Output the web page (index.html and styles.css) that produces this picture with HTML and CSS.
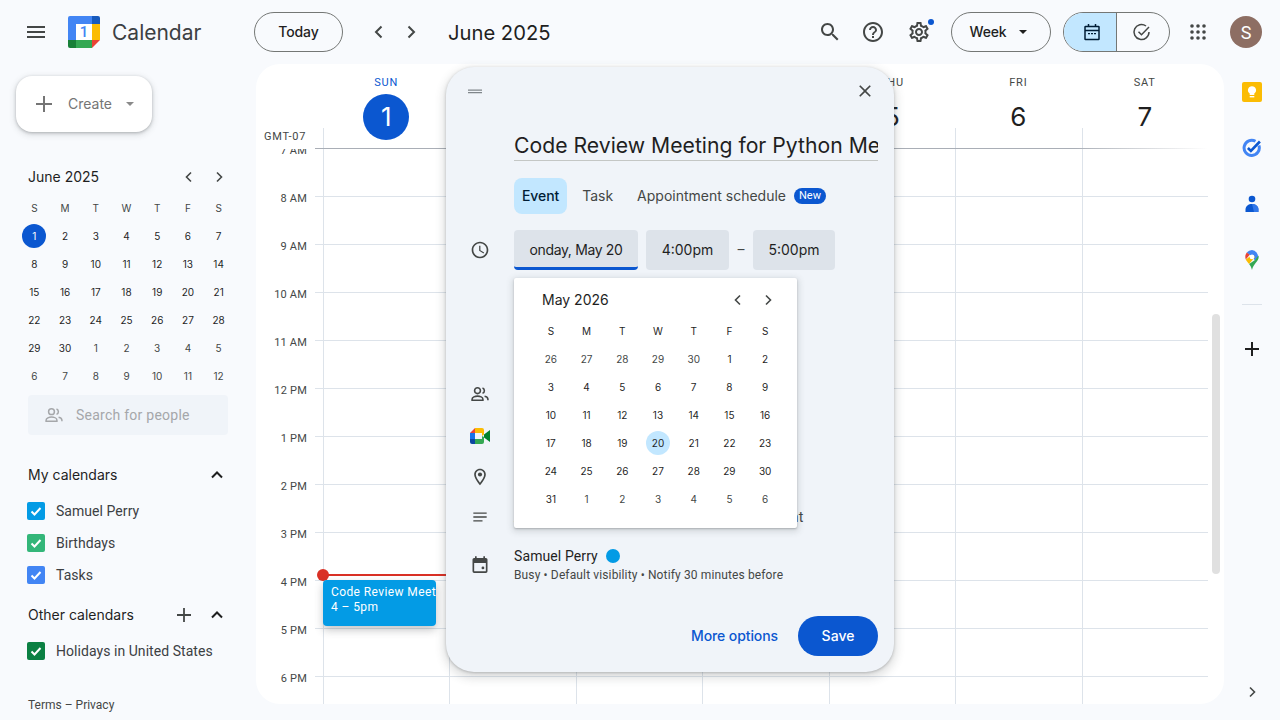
FILE: index.html
```html
<!DOCTYPE html>
<html lang="en">
<head>
<meta charset="utf-8">
<title>Calendar</title>
<link rel="stylesheet" href="styles.css">
</head>
<body>
<header class="topbar">
  <div class="brand">
    <svg class="ic24 menu" viewBox="0 0 24 24"><path d="M3 18h18v-2H3v2zm0-5h18v-2H3v2zm0-7v2h18V6H3z"/></svg>
    <svg class="logo" viewBox="0 0 32 32">
      <rect x="8" y="8" width="16" height="16" fill="#fff"/>
      <path d="M8 0H2a2 2 0 0 0-2 2v22h8V8h16V0z" fill="#4285f4"/>
      <path d="M24 0h6a2 2 0 0 1 2 2v6h-8z" fill="#185abc"/>
      <rect x="24" y="8" width="8" height="16" fill="#fbbc04"/>
      <rect x="8" y="24" width="16" height="8" fill="#34a853"/>
      <path d="M0 24h8v8H2a2 2 0 0 1-2-2z" fill="#188038"/>
      <path d="M24 24h8l-8 8z" fill="#ea4335"/>
      <text x="16" y="21" class="logo-one">1</text>
    </svg>
    <span class="brand-name">Calendar</span>
  </div>
  <button class="pill today">Today</button>
  <svg class="ic24 nav-prev" viewBox="0 0 24 24"><path class="chev" d="M14.5 6.5 9 12l5.500 5.500"/></svg>
  <svg class="ic24 nav-next" viewBox="0 0 24 24"><path class="chev" d="M9.500 6.500 15 12l-5.500 5.500"/></svg>
  <span class="period">June 2025</span>
  <svg class="ic24 t-search" viewBox="0 0 24 24"><path d="M15.500 14h-.79l-.28-.27C15.410 12.590 16 11.110 16 9.500 16 5.910 13.090 3 9.500 3S3 5.910 3 9.500 5.910 16 9.500 16c1.610 0 3.090-.59 4.230-1.570l.27.28v.79l5 4.990L20.490 19l-4.990-5zm-6 0C7.010 14 5 11.990 5 9.500S7.010 5 9.500 5 14 7.010 14 9.500 11.990 14 9.500 14z"/></svg>
  <svg class="ic24 t-help" viewBox="0 0 24 24"><path d="M11 18h2v-2h-2v2zm1-16C6.480 2 2 6.480 2 12s4.480 10 10 10 10-4.480 10-10S17.520 2 12 2zm0 18c-4.410 0-8-3.590-8-8s3.590-8 8-8 8 3.590 8 8-3.590 8-8 8zm0-14c-2.210 0-4 1.790-4 4h2c0-1.100.9-2 2-2s2 .9 2 2c0 2-3 1.750-3 5h2c0-2.250 3-2.500 3-5 0-2.210-1.790-4-4-4z"/></svg>
  <span class="settings">
    <svg class="ic24" viewBox="0 0 24 24"><path d="M19.430 12.980c.04-.32.07-.64.07-.98 0-.34-.03-.66-.07-.98l2.110-1.650c.19-.15.24-.42.12-.64l-2-3.460c-.09-.16-.26-.25-.44-.25-.06 0-.12.01-.17.03l-2.490 1c-.52-.4-1.080-.73-1.690-.98l-.38-2.650C14.460 2.180 14.250 2 14 2h-4c-.25 0-.46.18-.49.42l-.38 2.650c-.61.25-1.170.59-1.690.98l-2.490-1c-.06-.02-.12-.03-.18-.03-.17 0-.34.09-.43.25l-2 3.460c-.13.22-.07.49.12.64l2.110 1.650c-.04.32-.07.65-.07.98 0 .33.03.66.07.98l-2.110 1.650c-.19.15-.24.42-.12.64l2 3.460c.09.16.26.25.44.25.06 0 .12-.01.17-.03l2.490-1c.52.4 1.080.73 1.690.98l.38 2.650c.03.24.24.42.49.42h4c.25 0 .46-.18.49-.42l.38-2.650c.61-.25 1.170-.59 1.690-.98l2.490 1c.06.02.12.03.18.03.17 0 .34-.09.43-.25l2-3.460c.12-.22.07-.49-.12-.64l-2.110-1.650zm-1.980-1.710c.04.31.05.52.05.73 0 .21-.02.43-.05.73l-.14 1.130.89.7 1.080.84-.7 1.210-1.270-.51-1.040-.42-.9.68c-.43.32-.84.56-1.250.73l-1.060.43-.16 1.130-.2 1.350h-1.400l-.19-1.350-.16-1.130-1.060-.43c-.43-.18-.83-.41-1.230-.71l-.91-.7-1.060.43-1.270.51-.7-1.210 1.080-.84.89-.7-.14-1.130c-.03-.31-.05-.54-.05-.74s.02-.43.05-.73l.14-1.130-.89-.7-1.080-.84.7-1.210 1.270.51 1.040.42.9-.68c.43-.32.84-.56 1.250-.73l1.060-.43.16-1.130.2-1.350h1.390l.19 1.350.16 1.130 1.060.43c.43.18.83.41 1.230.71l.91.7 1.060-.43 1.270-.51.7 1.210-1.070.85-.89.7.14 1.130zM12 8c-2.210 0-4 1.790-4 4s1.790 4 4 4 4-1.790 4-4-1.790-4-4-4zm0 6c-1.100 0-2-.9-2-2s.9-2 2-2 2 .9 2 2-.9 2-2 2z"/></svg>
    <i class="badge-dot"></i>
  </span>
  <button class="pill week">Week<svg class="caret" viewBox="0 0 10 5"><path d="M0 0h10L5 5z"/></svg></button>
  <div class="toggle">
    <span class="toggle-cal">
      <svg class="ic20" viewBox="0 0 20 20"><path class="cal-line" d="M3.500 4.500h13a.5.5 0 0 1 .5.5v12a.5.5 0 0 1-.5.500h-13A.5.5 0 0 1 3 17V5a.5.5 0 0 1 .5-.5zM3 8.500h14M6.500 2v3M13.500 2v3"/><path class="cal-dots" d="M6 11h2v1.300H6zM9 11h2v1.300H9zM12 11h2v1.300h-2z"/></svg>
    </span>
    <span class="toggle-task">
      <svg class="ic20" viewBox="0 0 20 20"><path class="task-line" d="M17 10a7.500 7.500 0 1 1-3-6M6.500 9.700l3 3L17 5"/></svg>
    </span>
  </div>
  <svg class="ic24 t-apps" viewBox="0 0 24 24"><circle cx="6" cy="6" r="1.800"/><circle cx="12" cy="6" r="1.800"/><circle cx="18" cy="6" r="1.800"/><circle cx="6" cy="12" r="1.800"/><circle cx="12" cy="12" r="1.800"/><circle cx="18" cy="12" r="1.800"/><circle cx="6" cy="18" r="1.800"/><circle cx="12" cy="18" r="1.800"/><circle cx="18" cy="18" r="1.800"/></svg>
  <span class="avatar">S</span>
</header>

<main class="workspace">
  <aside class="sidebar">
    <button class="create">
      <svg class="ic24" viewBox="0 0 24 24"><path class="plus-grey" d="M12 4v16M4 12h16"/></svg>
      <span class="create-label">Create</span>
      <svg class="caret caret-grey" viewBox="0 0 10 5"><path d="M0 0h10L5 5z"/></svg>
    </button>
    <div class="mini-head">
      <span>June 2025</span>
      <svg class="ic16 mini-prev" viewBox="0 0 16 16"><path class="chev-s" d="M10 3.500 5.500 8l4.500 4.500"/></svg>
      <svg class="ic16 mini-next" viewBox="0 0 16 16"><path class="chev-s" d="M6 3.500 10.500 8 6 12.500"/></svg>
    </div>
    <div class="mini-grid">
      <b>S</b><b>M</b><b>T</b><b>W</b><b>T</b><b>F</b><b>S</b>
      <span class="today-num">1</span><span>2</span><span>3</span><span>4</span><span>5</span><span>6</span><span>7</span>
      <span>8</span><span>9</span><span>10</span><span>11</span><span>12</span><span>13</span><span>14</span>
      <span>15</span><span>16</span><span>17</span><span>18</span><span>19</span><span>20</span><span>21</span>
      <span>22</span><span>23</span><span>24</span><span>25</span><span>26</span><span>27</span><span>28</span>
      <span>29</span><span>30</span><span class="dim">1</span><span class="dim">2</span><span class="dim">3</span><span class="dim">4</span><span class="dim">5</span>
      <span class="dim">6</span><span class="dim">7</span><span class="dim">8</span><span class="dim">9</span><span class="dim">10</span><span class="dim">11</span><span class="dim">12</span>
    </div>
    <div class="people-search">
      <svg class="ic20 people-ic" viewBox="0 0 24 24"><circle class="ppl" cx="9" cy="8" r="3.500"/><path class="ppl" d="M2.500 19.500v-1.200c0-2.400 3.600-3.800 6.500-3.800s6.500 1.400 6.500 3.800v1.200zM15 4.800a3.400 3.400 0 0 1 0 6.400M17.500 14.800c2.300.5 4 1.700 4 3.500v1.200"/></svg>
      <span>Search for people</span>
    </div>
    <div class="sec-head sec-my">
      <span>My calendars</span>
      <svg class="ic20 sec-chev" viewBox="0 0 20 20"><path class="chev-b" d="M5 12.500 10 7.500l5 5"/></svg>
    </div>
    <div class="cal-row"><i class="check c-blue"><svg viewBox="0 0 18 18"><path d="M4.500 9.500l3 3 6-6.500"/></svg></i>Samuel Perry</div>
    <div class="cal-row"><i class="check c-green"><svg viewBox="0 0 18 18"><path d="M4.500 9.500l3 3 6-6.500"/></svg></i>Birthdays</div>
    <div class="cal-row"><i class="check c-indigo"><svg viewBox="0 0 18 18"><path d="M4.500 9.500l3 3 6-6.500"/></svg></i>Tasks</div>
    <div class="sec-head sec-other">
      <span>Other calendars</span>
      <svg class="ic20 sec-plus" viewBox="0 0 20 20"><path class="plus-dark" d="M10 3v14M3 10h14"/></svg>
      <svg class="ic20 sec-chev2" viewBox="0 0 20 20"><path class="chev-b" d="M5 12.500 10 7.500l5 5"/></svg>
    </div>
    <div class="cal-row cal-holiday"><i class="check c-dgreen"><svg viewBox="0 0 18 18"><path d="M4.500 9.500l3 3 6-6.500"/></svg></i>Holidays in United States</div>
    <div class="legal">Terms – Privacy</div>
  </aside>

  <section class="week-panel">
    <div class="week-head">
      <div class="gmt">GMT-07</div>
      <div class="day-head"><span class="dow dow-now">SUN</span><span class="dnum dnum-now">1</span></div>
      <div class="day-head"><span class="dow">MON</span><span class="dnum">2</span></div>
      <div class="day-head"><span class="dow">TUE</span><span class="dnum">3</span></div>
      <div class="day-head"><span class="dow">WED</span><span class="dnum">4</span></div>
      <div class="day-head"><span class="dow">THU</span><span class="dnum">5</span></div>
      <div class="day-head"><span class="dow">FRI</span><span class="dnum">6</span></div>
      <div class="day-head"><span class="dow">SAT</span><span class="dnum">7</span></div>
    </div>
    <div class="week-body">
      <div class="times">
        <div class="hour">7 AM</div><div class="hour">8 AM</div><div class="hour">9 AM</div><div class="hour">10 AM</div>
        <div class="hour">11 AM</div><div class="hour">12 PM</div><div class="hour">1 PM</div><div class="hour">2 PM</div>
        <div class="hour">3 PM</div><div class="hour">4 PM</div><div class="hour">5 PM</div><div class="hour">6 PM</div>
      </div>
      <div class="day-col">
        <div class="now-line"></div>
        <div class="event"><div class="event-title">Code Review Meeting for Python Meetup</div><div>4 – 5pm</div></div>
      </div>
      <div class="day-col"></div><div class="day-col"></div><div class="day-col"></div>
      <div class="day-col"></div><div class="day-col"></div><div class="day-col"></div>
    </div>
    <div class="scroll-thumb"></div>
  </section>

  <aside class="rail">
    <svg class="rail-ic" viewBox="0 0 20 20"><rect width="20" height="20" rx="2" fill="#fbbc04"/><path d="M10 4.300a4 4 0 0 0-2.300 7.300v1.400h4.600v-1.400A4 4 0 0 0 10 4.300z" fill="#fff"/><rect x="7.700" y="14" width="4.600" height="1.400" fill="#fff"/></svg>
    <svg class="rail-ic" viewBox="0 0 20 20"><path d="M16.900 7.500A7.600 7.600 0 1 1 13.500 3.300" fill="none" stroke="#4285f4" stroke-width="3"/><path d="M5.900 10l3 3 9-9.500" fill="none" stroke="#0b57d0" stroke-width="2.600"/></svg>
    <svg class="rail-ic" viewBox="0 0 20 20"><circle cx="10" cy="5" r="3.300" fill="#0b57d0"/><path d="M3.500 18v-2.500C3.500 12 6.500 10 10 10s6.500 2 6.500 5.500V18z" fill="#0b57d0"/><path d="M10 10c3.500 0 6.500 2 6.500 5.500V18H12z" fill="#4285f4" opacity=".7"/></svg>
    <svg class="rail-ic" viewBox="0 0 20 20"><path d="M10 0a6.700 6.700 0 0 0-5.200 2.500L10 7z" fill="#4285f4"/><path d="M10 0v7l3 3.400L16 7.500A6.800 6.800 0 0 0 10 0z" fill="#4285f4"/><path d="M4.800 2.500A6.700 6.700 0 0 0 3.300 7c0 .9.200 1.700.5 2.400l3.900-4.600z" fill="#ea4335"/><path d="M3.800 9.400c.8 1.800 2.100 3 3.300 4.500L13 7l-2.800-2.300z" fill="#fbbc04"/><path d="M13 10l-5.900 3.900c1.200 1.500 2.300 3.200 2.900 6.100.7-3.400 2.200-5 3.600-6.900 1.400-1.800 3.100-3.500 3.100-6.100 0-.5-.1-1-.2-1.500z" fill="#34a853"/><circle cx="10" cy="6.900" r="2.400" fill="#fff"/></svg>
    <div class="rail-sep"></div>
    <svg class="rail-plus" viewBox="0 0 20 20"><path d="M10 3v14M3 10h14"/></svg>
    <svg class="rail-chev ic16" viewBox="0 0 16 16"><path class="chev-s" d="M6 3.500 10.500 8 6 12.500"/></svg>
  </aside>
</main>

<div class="dialog">
  <div class="dlg-top">
    <svg class="ic20" viewBox="0 0 20 20"><path class="handle" d="M3 8.500h14v1.200H3zM3 11h14v1.200H3z"/></svg>
    <svg class="ic20" viewBox="0 0 24 24"><path d="M19 6.410 17.590 5 12 10.590 6.410 5 5 6.410 10.590 12 5 17.590 6.410 19 12 13.410 17.590 19 19 17.590 13.410 12z"/></svg>
  </div>
  <div class="dlg-title">Code Review Meeting for Python Meetup</div>
  <div class="tabs">
    <span class="tab tab-on">Event</span>
    <span class="tab">Task</span>
    <span class="tab">Appointment schedule</span>
    <span class="new-badge">New</span>
  </div>
  <div class="when">
    <svg class="ic20 row-ic" viewBox="0 0 24 24"><path d="M11.990 2C6.470 2 2 6.480 2 12s4.470 10 9.990 10C17.520 22 22 17.520 22 12S17.520 2 11.990 2zM12 20c-4.420 0-8-3.580-8-8s3.580-8 8-8 8 3.580 8 8-3.580 8-8 8zm.5-13H11v6l5.250 3.150.75-1.230-4.500-2.670z"/></svg>
    <span class="chip chip-date">onday, May 20</span>
    <span class="chip chip-start">4:00pm</span>
    <span class="dash">–</span>
    <span class="chip chip-end">5:00pm</span>
  </div>
  <div class="opt opt-guests">
    <svg class="ic20 row-ic" viewBox="0 0 24 24"><circle class="ppl-d" cx="9" cy="8" r="3.500"/><path class="ppl-d" d="M2.500 19.500v-1.200c0-2.400 3.600-3.800 6.500-3.800s6.500 1.400 6.500 3.800v1.200zM15 4.800a3.400 3.400 0 0 1 0 6.400M17.500 14.800c2.300.5 4 1.700 4 3.500v1.200"/></svg>
  </div>
  <div class="opt opt-meet">
    <svg class="ic20 row-ic" viewBox="0 0 20 16"><path d="M0 5h5V0z" fill="#ea4335"/><path d="M5 0v5h7v3l2-1.500V2a2 2 0 0 0-2-2z" fill="#fbbc04"/><path d="M0 5v6h5V5z" fill="#1a73e8"/><path d="M0 11v3a2 2 0 0 0 2 2h3v-5z" fill="#0d47a1"/><path d="M5 11v5h7a2 2 0 0 0 2-2V9l-2-1v3z" fill="#34a853"/><path d="M14 6.500 20 2v12l-6-4.500z" fill="#00832d"/></svg>
  </div>
  <div class="opt opt-place">
    <svg class="ic20 row-ic" viewBox="0 0 24 24"><path d="M12 2C8.130 2 5 5.130 5 9c0 5.250 7 13 7 13s7-7.750 7-13c0-3.870-3.130-7-7-7zM7 9c0-2.760 2.240-5 5-5s5 2.240 5 5c0 2.880-2.880 7.190-5 9.880C9.920 16.210 7 11.850 7 9z"/><circle cx="12" cy="9" r="2.500"/></svg>
  </div>
  <div class="opt opt-notes">
    <svg class="ic20 row-ic" viewBox="0 0 24 24"><path d="M4 6.500h16v1.600H4zM4 11.200h16v1.600H4zM4 15.900h11v1.600H4z"/></svg>
    <span>Add description or a Google Drive attachment</span>
  </div>
  <div class="owner">
    <svg class="ic20 row-ic" viewBox="0 0 24 24"><path d="M8 1.500v2h8v-2h2v2h1a2 2 0 0 1 2 2v14a2 2 0 0 1-2 2H5a2 2 0 0 1-2-2v-14a2 2 0 0 1 2-2h1v-2zM5 9.500v10h14v-10z"/><circle cx="15.500" cy="15.500" r="1.700"/></svg>
    <div>
      <div class="owner-name">Samuel Perry<i class="owner-dot"></i></div>
      <div class="owner-sub">Busy • Default visibility • Notify 30 minutes before</div>
    </div>
  </div>
  <div class="dlg-foot">
    <span class="more">More options</span>
    <button class="save">Save</button>
  </div>

  <div class="picker">
    <div class="picker-head">
      <span>May 2026</span>
      <svg class="ic16 pick-prev" viewBox="0 0 16 16"><path class="chev-s" d="M10 3.500 5.500 8l4.500 4.500"/></svg>
      <svg class="ic16 pick-next" viewBox="0 0 16 16"><path class="chev-s" d="M6 3.500 10.500 8 6 12.500"/></svg>
    </div>
    <div class="picker-grid">
      <b>S</b><b>M</b><b>T</b><b>W</b><b>T</b><b>F</b><b>S</b>
      <span class="dim">26</span><span class="dim">27</span><span class="dim">28</span><span class="dim">29</span><span class="dim">30</span><span>1</span><span>2</span>
      <span>3</span><span>4</span><span>5</span><span>6</span><span>7</span><span>8</span><span>9</span>
      <span>10</span><span>11</span><span>12</span><span>13</span><span>14</span><span>15</span><span>16</span>
      <span>17</span><span>18</span><span>19</span><span class="sel-num">20</span><span>21</span><span>22</span><span>23</span>
      <span>24</span><span>25</span><span>26</span><span>27</span><span>28</span><span>29</span><span>30</span>
      <span>31</span><span class="dim">1</span><span class="dim">2</span><span class="dim">3</span><span class="dim">4</span><span class="dim">5</span><span class="dim">6</span>
    </div>
  </div>
</div>
</body>
</html>
```
FILE: styles.css
```css
* { box-sizing: border-box; }
html, body { margin: 0; height: 720px; overflow: hidden; }
body { background: #f8fafd; color: #1f1f1f; font-family: Roboto, "Liberation Sans", sans-serif; font-size: 14px; position: relative; }
button { font: inherit; color: inherit; padding: 0; background: none; border: 0; }
svg { display: block; flex: none; fill: #444746; }
i { display: block; }

.brand-name, .pill, .period, .create-label, .mini-head, .sec-head, .dlg-title, .tab, .chip, .more, .save, .picker-head, .dnum, .mini-grid, .picker-grid { font-family: Inter, Roboto, sans-serif; }

.ic24 { width: 24px; height: 24px; }
.ic20 { width: 20px; height: 20px; }
.ic16 { width: 16px; height: 16px; }
.chev { fill: none; stroke: #444746; stroke-width: 2; }
.chev-s { fill: none; stroke: #444746; stroke-width: 1.6; }
.chev-b { fill: none; stroke: #1f1f1f; stroke-width: 2; }

/* top bar */
.topbar { height: 64px; display: flex; align-items: center; }
.brand { width: 254px; padding-left: 24px; display: flex; align-items: center; flex: none; }
.logo { width: 32px; height: 32px; margin-left: 20px; }
.logo-one { font: 500 15px Roboto, sans-serif; fill: #4285f4; text-anchor: middle; }
.brand-name { margin-left: 12px; font-size: 21px; color: #3c4043; }
.pill { height: 40px; border: 1px solid #747775; border-radius: 20px; display: flex; align-items: center; justify-content: center; font-weight: 500; letter-spacing: -.1px; color: #1f1f1f; padding-bottom: 2px; }
.today { width: 89px; }
.nav-prev { margin-left: 24px; }
.nav-next { margin-left: 8px; }
.period { margin-left: 25px; font-size: 20.2px; color: #1f1f1f; white-space: nowrap; width: 370px; }
.t-help { margin-left: 19px; }
.settings { margin-left: 22px; position: relative; }
.badge-dot { position: absolute; top: -1px; right: -3px; width: 6px; height: 6px; border-radius: 50%; background: #0b57d0; }
.week { width: 100px; margin-left: 20px; gap: 12px; padding-right: 6px; }
.caret { width: 8px; height: 4px; fill: #1f1f1f; }
.week .caret { margin-top: 2px; }
.toggle { width: 107px; height: 40px; margin-left: 12px; display: flex; border: 1px solid #747775; border-radius: 20px; overflow: hidden; }
.toggle-cal { width: 53px; background: #c2e7ff; display: flex; align-items: center; justify-content: center; border-right: 1px solid #747775; padding-left: 4px; }
.toggle-task { flex: 1; display: flex; align-items: center; justify-content: center; padding-right: 2px; }
.cal-line { fill: none; stroke: #001d35; stroke-width: 1.5; }
.cal-dots { fill: #001d35; }
.task-line { fill: none; stroke: #444746; stroke-width: 1.5; }
.t-apps { margin-left: 16px; }
.avatar { width: 32px; height: 32px; margin-left: 20px; border-radius: 50%; background: #8d6e63; color: #fff; display: flex; align-items: center; justify-content: center; font-size: 18px; }

/* layout */
.workspace { display: flex; height: 656px; }
.sidebar { width: 256px; flex: none; display: flex; flex-direction: column; }
.week-panel { flex: 1; height: 640px; background: #fff; border-radius: 24px; overflow: hidden; position: relative; display: flex; flex-direction: column; }
.rail { width: 56px; flex: none; display: flex; flex-direction: column; align-items: center; padding-top: 18px; }

/* sidebar */
.create { width: 136px; height: 56px; margin: 12px 0 0 16px; background: #fff; border-radius: 16px; box-shadow: 0 1px 3px rgba(60,64,67,.3), 0 2px 6px 1px rgba(60,64,67,.15); display: flex; align-items: center; padding-left: 16px; }
.plus-grey { fill: none; stroke: #757575; stroke-width: 2; }
.create-label { margin-left: 12px; color: #757575; margin-bottom: 2px; }
.caret-grey { margin-left: 14px; fill: #8a8a8a; }
.mini-head { height: 28px; margin: 31px 0 3px 28px; display: flex; align-items: center; font-size: 14px; color: #1f1f1f; }
.mini-head span, .sec-head span, .picker-head span { margin-bottom: 2px; }
.mini-prev { margin-left: auto; }
.mini-next { margin: 0 29px 0 14px; }
.mini-grid { margin-left: 19px; width: 215px; display: grid; grid-template-columns: repeat(7, 1fr); grid-auto-rows: 28px; font-size: 10px; color: #1f1f1f; text-align: center; }
.mini-grid b, .mini-grid span, .picker-grid b, .picker-grid span { display: flex; align-items: center; justify-content: center; font-weight: 400; position: relative; z-index: 0; }
.mini-grid b { color: #444746; }
.dim { color: #444746; }
.today-num { color: #fff; }
.today-num::before, .sel-num::before { content: ""; position: absolute; left: 50%; top: 50%; width: 24px; height: 24px; margin: -12px 0 0 -12px; border-radius: 50%; background: #0b57d0; z-index: -1; }
.sel-num::before { background: #c2e7ff; }
.people-search { width: 200px; height: 40px; margin: 5px 0 0 28px; background: #f0f4f9; border-radius: 4px; display: flex; align-items: center; padding-left: 16px; gap: 12px; color: #a5a7aa; letter-spacing: .25px; }
.ppl { fill: none; stroke: #a5a7aa; stroke-width: 1.8; }
.ppl-d { fill: none; stroke: #444746; stroke-width: 1.9; }
.sec-head { height: 28px; margin-left: 28px; display: flex; align-items: center; color: #1f1f1f; }
.sec-my { margin-top: 26px; margin-bottom: 6px; }
.sec-other { margin-top: 10px; margin-bottom: 6px; }
.sec-chev { margin-left: auto; margin-right: 29px; }
.sec-plus { margin-left: auto; }
.sec-chev2 { margin: 0 29px 0 13px; }
.plus-dark { fill: none; stroke: #444746; stroke-width: 1.8; }
.cal-row { height: 32px; padding-left: 27px; display: flex; align-items: center; gap: 11px; color: #3c4043; letter-spacing: .05px; }
.check { width: 18px; height: 18px; border-radius: 2px; }
.check svg { width: 18px; height: 18px; fill: none; stroke: #fff; stroke-width: 2; }
.check path { fill: none; }
.c-blue { background: #039be5; }
.c-green { background: #33b679; }
.c-indigo { background: #4285f4; }
.c-dgreen { background: #0b8043; }
.legal { margin: auto 0 7px 28px; height: 16px; line-height: 16px; font-size: 12px; color: #444746; }

/* week */
.week-head { height: 85px; display: flex; padding-right: 16px; padding-left: 67px; position: relative; flex: none; }
.week-head::after { content: ""; position: absolute; left: 59px; right: 16px; bottom: 0; height: 1px; background: linear-gradient(to right, #a9aeb6 85%, #fff); }
.gmt { position: absolute; left: 8px; top: 66px; font-size: 11px; line-height: 14px; color: #444746; letter-spacing: .75px; }
.day-head { flex: 1 1 0; position: relative; display: flex; flex-direction: column; align-items: center; padding-top: 11px; }
.day-head::before { content: ""; position: absolute; left: 0; top: 64px; bottom: 0; width: 1px; background: #dde3ea; }
.dow { height: 16px; line-height: 16px; font-size: 11px; font-weight: 400; letter-spacing: .8px; color: #444746; }
.dow-now { color: #0b57d0; }
.dnum { width: 46px; height: 46px; margin-top: 3px; padding-bottom: 2px; border-radius: 50%; display: flex; align-items: center; justify-content: center; font-size: 26px; color: #1f1f1f; position: relative; }
.dnum-now { background: #0b57d0; color: #fff; }
.week-body { flex: 1; display: flex; padding-right: 16px; overflow: hidden; }
.times { width: 67px; flex: none; padding-right: 16px; background: linear-gradient(to bottom, transparent 47px, #dde3ea 47px) right top / 8px 48px repeat-y; }
.hour { height: 48px; line-height: 16px; font-size: 11px; color: #444746; text-align: right; position: relative; top: -6px; letter-spacing: .2px; }
.day-col { flex: 1 1 0; border-left: 1px solid #dde3ea; position: relative; background: repeating-linear-gradient(to bottom, transparent 0 47px, #dde3ea 47px 48px); }
.now-line { position: absolute; left: -1px; right: 0; top: 425px; height: 2px; background: #d93025; }
.now-line::before { content: ""; position: absolute; left: -6px; top: -5px; width: 12px; height: 12px; border-radius: 50%; background: #d93025; }
.event { position: absolute; left: -1px; top: 431px; width: 113px; height: 46px; padding: 5px 0 0 8px; background: #039be5; color: #fff; border-radius: 4px; font-size: 12px; line-height: 15px; box-shadow: 0 4px 8px rgba(60,64,67,.3); overflow: hidden; white-space: nowrap; letter-spacing: .4px; }
.event-title { overflow: hidden; }
.scroll-thumb { position: absolute; left: 956px; top: 250px; width: 8px; height: 260px; border-radius: 4px; background: #e0e0e0; }

/* rail */
.rail-ic { width: 20px; height: 20px; margin-bottom: 36px; }
.rail-sep { width: 20px; height: 1px; background: #dde3ea; margin-top: -2px; }
.rail-plus { width: 20px; height: 20px; margin-top: 34px; }
.rail-plus path { fill: none; stroke: #1f1f1f; stroke-width: 2; }
.rail-chev { margin-top: auto; margin-bottom: 20px; }

/* dialog */
.dialog { position: absolute; left: 446px; top: 67px; width: 448px; height: 605px; background: #f0f4f9; border-radius: 28px; box-shadow: 0 4px 8px 3px rgba(60,64,67,.15), 0 1px 3px rgba(60,64,67,.3); display: flex; flex-direction: column; padding-bottom: 16px; }
.dlg-top { height: 48px; flex: none; display: flex; align-items: center; justify-content: space-between; padding: 0 19px 0 19px; }
.handle { fill: #80868b; }
.dlg-title { margin-left: 68px; width: 364px; height: 46px; padding-top: 15px; line-height: 30px; font-size: 21.2px; color: #1f1f1f; border-bottom: 1px solid #c4c7c5; overflow: hidden; white-space: nowrap; flex: none; }
.tabs { margin: 17px 0 0 68px; height: 36px; display: flex; align-items: center; flex: none; color: #444746; }
.tab { margin-right: 0; padding: 0 8px; height: 36px; line-height: 36px; border-radius: 8px; white-space: nowrap; }
.tab + .tab { margin-left: 8px; }
.tab-on + .tab { margin-left: 7px; }
.tab-on { background: #c2e7ff; color: #001d35; font-weight: 500; letter-spacing: -.1px; }
.new-badge { height: 16px; width: 32px; margin-left: 0; border-radius: 8px; background: #0b57d0; color: #fff; font-size: 11px; line-height: 16px; text-align: center; }
.when { margin-top: 16px; height: 40px; display: flex; align-items: center; flex: none; padding-left: 24px; }
.row-ic { margin-right: 24px; }
.chip { height: 40px; line-height: 40px; background: #dde3ea; border-radius: 4px; color: #1f1f1f; white-space: nowrap; text-align: center; }
.chip-date { width: 124px; border-bottom: 3px solid #0b57d0; letter-spacing: -.35px; }
.chip-start { width: 83px; margin-left: 8px; }
.dash { width: 24px; text-align: center; color: #444746; }
.chip-end { width: 82px; }
.opt { padding-left: 24px; display: flex; align-items: center; flex: none; color: #444746; white-space: nowrap; letter-spacing: .15px; }
.opt-guests { margin-top: 103px; height: 42px; }
.opt-meet { height: 42px; }
.opt-place { height: 39px; }
.opt-notes { height: 42px; }
.owner { margin-top: 8px; padding-left: 24px; display: flex; align-items: center; flex: none; }
.owner-name { height: 20px; line-height: 20px; display: flex; align-items: center; gap: 8px; color: #1f1f1f; letter-spacing: .1px; }
.owner-dot { width: 14px; height: 14px; border-radius: 50%; background: #039be5; }
.owner-sub { height: 18px; line-height: 18px; font-size: 12px; color: #444746; letter-spacing: .13px; }
.dlg-foot { margin-top: auto; height: 40px; padding-right: 16px; display: flex; align-items: center; justify-content: flex-end; flex: none; }
.more { color: #0b57d0; font-weight: 500; letter-spacing: -.1px; margin-bottom: 2px; }
.save { width: 80px; height: 40px; margin-left: 20px; border-radius: 20px; background: #0b57d0; color: #fff; font-weight: 500; padding-bottom: 2px; }

/* date picker */
.picker { position: absolute; left: 68px; top: 211px; width: 283px; height: 250px; background: #fff; border-radius: 2px; box-shadow: 0 2px 6px 2px rgba(60,64,67,.15), 0 1px 2px rgba(60,64,67,.3); padding: 8px 14px 15px 19px; }
.picker-head { height: 28px; margin-bottom: 3px; padding-left: 9px; display: flex; align-items: center; }
.pick-prev { margin-left: auto; }
.pick-next { margin: 0 7px 0 14px; }
.picker-grid { display: grid; grid-template-columns: repeat(7, 1fr); grid-auto-rows: 28px; font-size: 10px; color: #1f1f1f; }
```
